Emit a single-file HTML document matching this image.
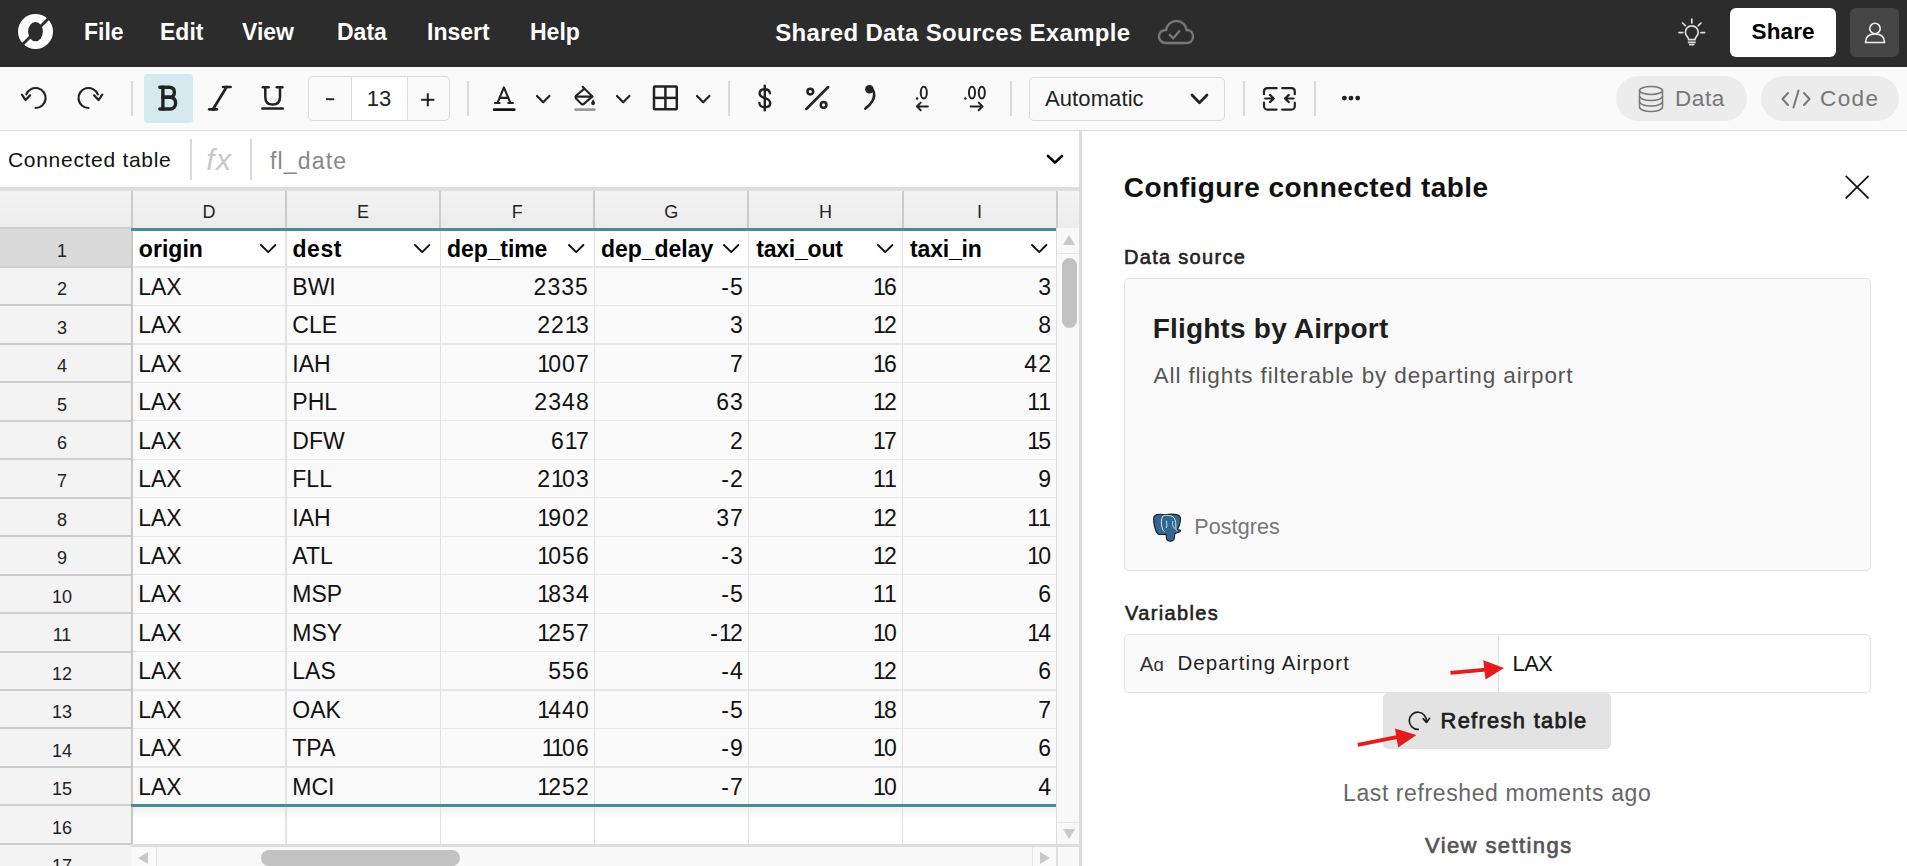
<!DOCTYPE html><html><head><meta charset="utf-8"><style>
html,body{margin:0;padding:0;width:1907px;height:866px;overflow:hidden;background:#fff;font-family:"Liberation Sans",sans-serif}
.t{position:absolute;line-height:1;white-space:nowrap}
</style></head><body>
<div style="position:absolute;left:0;top:0;width:1907px;height:67px;background:#2c2c2c"></div>
<svg style="position:absolute;left:17px;top:13px" width="37" height="37" viewBox="0 0 37 37">
<circle cx="18.5" cy="18.5" r="17.5" fill="#fff"/>
<ellipse cx="18.5" cy="18.6" rx="7.4" ry="9.6" fill="#2c2c2c"/>
<line x1="3.5" y1="33.5" x2="33.5" y2="3.5" stroke="#2c2c2c" stroke-width="2.8"/>
</svg>
<div class="t" style="left:84px;top:20.53px;font-size:23px;font-weight:700;color:#fff;">File</div>
<div class="t" style="left:160px;top:20.53px;font-size:23px;font-weight:700;color:#fff;">Edit</div>
<div class="t" style="left:242px;top:20.53px;font-size:23px;font-weight:700;color:#fff;">View</div>
<div class="t" style="left:337px;top:20.53px;font-size:23px;font-weight:700;color:#fff;">Data</div>
<div class="t" style="left:427px;top:20.53px;font-size:23px;font-weight:700;color:#fff;">Insert</div>
<div class="t" style="left:530px;top:20.53px;font-size:23px;font-weight:700;color:#fff;">Help</div>
<div class="t" id="title" style="left:452.8461538461538px;width:1000px;text-align:center;top:20.78px;font-size:24px;font-weight:700;color:#fff;letter-spacing:0.308px;">Shared Data Sources Example</div>
<svg style="position:absolute;left:1157px;top:19px" width="38" height="26" viewBox="0 0 38 26">
<path d="M9 24 C4 24 2 20.5 2 17.5 C2 13.5 5 11 9 11 C10 5.5 14.5 2 19.5 2 C25 2 29 6 29.5 11 C33.5 11 36 14 36 17.5 C36 21 33.5 24 29.5 24 Z" fill="none" stroke="#777" stroke-width="2.4"/>
<path d="M12 15.2 L16.2 19.3 L23 11.3" fill="none" stroke="#777" stroke-width="2.4"/>
</svg>
<svg style="position:absolute;left:1674px;top:14px;overflow:visible" width="36" height="36" viewBox="1674 14 36 36"><g fill="none" stroke="#ddd" stroke-width="1.7" stroke-linecap="round"><line x1="1691.8" y1="19" x2="1691.8" y2="23"/><line x1="1682.6" y1="23" x2="1685.3" y2="25.6"/><line x1="1701" y1="23" x2="1698.3" y2="25.6"/><line x1="1679" y1="32.6" x2="1682.8" y2="32.6"/><line x1="1700.8" y1="32.6" x2="1704.6" y2="32.6"/><path d="M1688.6 39.6 C1688.6 37.4 1685.4 35.8 1685.4 32.2 C1685.4 28.6 1688.2 25.8 1691.8 25.8 C1695.4 25.8 1698.2 28.6 1698.2 32.2 C1698.2 35.8 1695 37.4 1695 39.6 Z"/><line x1="1688.6" y1="42.4" x2="1695" y2="42.4"/><line x1="1689.8" y1="44.6" x2="1693.8" y2="44.6"/></g></svg>
<div style="position:absolute;left:1730px;top:8px;width:106px;height:49px;background:#fff;border-radius:6px"></div>
<div class="t" id="share" style="left:1283.1500000000005px;width:1000px;text-align:center;top:20.75px;font-size:22.5px;font-weight:700;color:#000;letter-spacing:0.100px;">Share</div>
<div style="position:absolute;left:1850px;top:8px;width:49px;height:49px;background:#464646;border-radius:6px"></div>
<svg style="position:absolute;left:1862.7px;top:20.6px" width="24" height="24" viewBox="0 0 24 24">
<g fill="none" stroke="#eee" stroke-width="1.6"><circle cx="12" cy="7.5" r="5.2"/><path d="M2.5 21.5 C2.5 15.5 6.5 13 12 13 C17.5 13 21.5 15.5 21.5 21.5 Z"/></g></svg>
<div style="position:absolute;left:0;top:67px;width:1907px;height:63px;background:#fafafa;border-bottom:1.5px solid #dedede"></div>
<div style="position:absolute;left:131px;top:81px;width:2px;height:35px;background:#dadada"></div>
<div style="position:absolute;left:467.4px;top:81px;width:2px;height:35px;background:#dadada"></div>
<div style="position:absolute;left:727.9px;top:81px;width:2px;height:35px;background:#dadada"></div>
<div style="position:absolute;left:1009.6px;top:81px;width:2px;height:35px;background:#dadada"></div>
<div style="position:absolute;left:1242.8px;top:81px;width:2px;height:35px;background:#dadada"></div>
<div style="position:absolute;left:1314.2px;top:81px;width:2px;height:35px;background:#dadada"></div>
<svg style="position:absolute;left:14px;top:78px;overflow:visible" width="96" height="40" viewBox="14 78 96 40"><g fill="none" stroke="#222" stroke-width="2.2" stroke-linecap="round" stroke-linejoin="round"><path d="M35.6 108 A10 10 0 1 0 26.3 94.4"/><path d="M21.9 94.6 L25.6 100.1 L30.1 95.2"/><path d="M88.5 108 A10 10 0 1 1 97.8 94.4"/><path d="M94.1 95.2 L98.5 100.1 L102.3 94.6"/></g></svg>
<div style="position:absolute;left:144px;top:74px;width:49px;height:49px;background:#d4eaee;border-radius:4px"></div>
<svg style="position:absolute;left:150px;top:80px;overflow:visible" width="36" height="36" viewBox="150 80 36 36"><g fill="none" stroke="#222" stroke-width="3.4" stroke-linecap="round" stroke-linejoin="round"><path d="M159.8 87.3 H169 C172.5 87.3 174.4 89.3 174.4 92.2 C174.4 95.2 172.5 97.3 169 97.3 H162.9"/><path d="M162.9 97.3 H170 C173.8 97.3 175.6 99.8 175.6 103 C175.6 106.5 173.5 109 170 109 H159.8"/><path d="M162.9 87.3 V109"/></g></svg>
<svg style="position:absolute;left:200px;top:80px;overflow:visible" width="40" height="36" viewBox="200 80 40 36"><g fill="none" stroke="#222" stroke-width="2.7" stroke-linecap="round"><line x1="223.2" y1="87" x2="230.6" y2="87"/><line x1="209.3" y1="109.3" x2="216.8" y2="109.3"/><line x1="226.6" y1="87" x2="213" y2="109.3"/></g></svg>
<svg style="position:absolute;left:255px;top:80px;overflow:visible" width="36" height="36" viewBox="255 80 36 36"><g fill="none" stroke="#222" stroke-width="2.5" stroke-linecap="round"><path d="M265.3 87.2 V97 C265.3 102.3 268 104.6 272.6 104.6 C277.2 104.6 280 102.3 280 97 V87.2"/><line x1="262.8" y1="87.2" x2="268.6" y2="87.2"/><line x1="276.8" y1="87.2" x2="282.4" y2="87.2"/><line x1="262.4" y1="108.4" x2="282.8" y2="108.4"/></g></svg>
<div style="position:absolute;left:308px;top:76px;width:140px;height:43px;border:1px solid #dcdcdc;border-radius:5px;background:#fafafa"></div>
<div style="position:absolute;left:350.5px;top:77px;width:55px;height:43px;background:#fff;border-left:1px solid #dcdcdc;border-right:1px solid #dcdcdc"></div>
<svg style="position:absolute;left:320px;top:90px;overflow:visible" width="20" height="20" viewBox="320 90 20 20"><line x1="326" y1="99.2" x2="334.2" y2="99.2" stroke="#222" stroke-width="1.9"/></svg>
<div class="t" style="left:-121px;width:1000px;text-align:center;top:87.88px;font-size:22px;font-weight:400;color:#222;">13</div>
<svg style="position:absolute;left:415px;top:88px;overflow:visible" width="25" height="25" viewBox="415 88 25 25"><g stroke="#222" stroke-width="2"><line x1="421.2" y1="99.8" x2="434.4" y2="99.8"/><line x1="427.8" y1="93.3" x2="427.8" y2="106.3"/></g></svg>
<svg style="position:absolute;left:488px;top:82px;overflow:visible" width="32" height="32" viewBox="488 82 32 32"><g fill="none" stroke="#222" stroke-width="2.1" stroke-linecap="round" stroke-linejoin="round"><path d="M497.6 102.7 L503.9 87.4 L510.3 102.7"/><line x1="500" y1="97.9" x2="507.8" y2="97.9"/><line x1="495" y1="103" x2="499.6" y2="103"/><line x1="508.3" y1="103" x2="512.9" y2="103"/></g><rect x="492.8" y="108.2" width="22.8" height="2.9" rx="1.45" fill="#111"/></svg>
<svg style="position:absolute;left:533.8px;top:93px;overflow:visible" width="18.40000000000009" height="12.200000000000003" viewBox="533.8 93 18.40000000000009 12.200000000000003"><path d="M536.8 96 L543.0 102.2 L549.2 96" fill="none" stroke="#222" stroke-width="2.3" stroke-linecap="round" stroke-linejoin="round"/></svg>
<svg style="position:absolute;left:570px;top:82px;overflow:visible" width="32" height="32" viewBox="570 82 32 32"><g fill="none" stroke="#222" stroke-width="2.1" stroke-linecap="round" stroke-linejoin="round"><path d="M582.6 86.8 L592.4 96.4 L584.2 103.6 Q582.6 105 581 103.6 L576 98.6 Q574.8 97.2 576 95.8 L584.4 88.6"/><line x1="576.4" y1="96.6" x2="592.2" y2="96.6"/></g><path d="M593.1 99.2 C593.1 99.2 595 102 595 103.2 C595 104.3 594.2 105 593.1 105 C592 105 591.2 104.3 591.2 103.2 C591.2 102 593.1 99.2 593.1 99.2 Z" fill="#222"/><rect x="574.2" y="108.3" width="21.5" height="2.6" rx="1.3" fill="#9a9a9a"/></svg>
<svg style="position:absolute;left:614px;top:93px;overflow:visible" width="18.399999999999977" height="12.200000000000003" viewBox="614 93 18.399999999999977 12.200000000000003"><path d="M617 96 L623.2 102.2 L629.4 96" fill="none" stroke="#222" stroke-width="2.3" stroke-linecap="round" stroke-linejoin="round"/></svg>
<svg style="position:absolute;left:648px;top:80px;overflow:visible" width="36" height="36" viewBox="648 80 36 36"><g fill="none" stroke="#222" stroke-width="2.5" stroke-linejoin="round"><rect x="654" y="86.5" width="22.8" height="22.8" rx="0.8"/><line x1="665.4" y1="86.5" x2="665.4" y2="109.3"/><line x1="654" y1="97.9" x2="676.8" y2="97.9"/></g></svg>
<svg style="position:absolute;left:694.2px;top:93px;overflow:visible" width="18.399999999999977" height="12.200000000000003" viewBox="694.2 93 18.399999999999977 12.200000000000003"><path d="M697.2 96 L703.4000000000001 102.2 L709.6 96" fill="none" stroke="#222" stroke-width="2.3" stroke-linecap="round" stroke-linejoin="round"/></svg>
<svg style="position:absolute;left:752px;top:82px;overflow:visible" width="26" height="32" viewBox="752 82 26 32"><g fill="none" stroke="#222" stroke-width="2.4" stroke-linecap="round"><path d="M770 93.4 C769.6 90.6 767.6 89.3 764.8 89.3 C761.6 89.3 759.6 91.1 759.6 93.6 C759.6 96.6 762.2 97.4 765 98.1 C768 98.9 770.2 100.2 770.2 103.2 C770.2 105.9 768.1 107.2 764.8 107.2 C761.6 107.2 759.6 105.8 759.4 103"/><line x1="764.8" y1="85.8" x2="764.8" y2="110.3"/></g></svg>
<svg style="position:absolute;left:800px;top:82px;overflow:visible" width="34" height="32" viewBox="800 82 34 32"><g fill="none" stroke="#222" stroke-width="2.5" stroke-linecap="round"><circle cx="810.3" cy="91.6" r="2.85"/><circle cx="823.6" cy="104.9" r="2.85"/><line x1="806.3" y1="109" x2="828.2" y2="87"/></g></svg>
<svg style="position:absolute;left:858px;top:82px;overflow:visible" width="22" height="32" viewBox="858 82 22 32"><circle cx="869.4" cy="89.3" r="4.3" fill="#222"/><path d="M873 90 C874.8 93.5 874.4 97.5 872.3 101.2 C870.6 104.2 868.2 106.6 865.3 108.6" fill="none" stroke="#222" stroke-width="2.6" stroke-linecap="round"/></svg>
<svg style="position:absolute;left:910px;top:82px;overflow:visible" width="80" height="32" viewBox="910 82 80 32"><g fill="none" stroke="#222" stroke-width="2" stroke-linecap="round" stroke-linejoin="round"><ellipse cx="923.8" cy="92.6" rx="3.05" ry="5.95"/><path d="M927.8 106.4 H917 M920.7 102.6 L916.9 106.4 L920.7 110.2"/><ellipse cx="972" cy="92.6" rx="3.05" ry="5.95"/><ellipse cx="981.8" cy="92.6" rx="3.05" ry="5.95"/><path d="M970.6 106.4 H982.4 M978.7 102.6 L982.5 106.4 L978.7 110.2"/></g><circle cx="917.1" cy="98.6" r="1.25" fill="#222"/><circle cx="965.4" cy="98.6" r="1.25" fill="#222"/></svg>
<div style="position:absolute;left:1029px;top:77px;width:194px;height:42px;border:1px solid #dcdcdc;border-radius:5px;background:#fafafa"></div>
<div class="t" id="auto" style="left:1045px;top:88.18px;font-size:22px;font-weight:400;color:#222;letter-spacing:0.100px;">Automatic</div>
<svg style="position:absolute;left:1189px;top:91.8px;overflow:visible" width="21" height="13.799999999999997" viewBox="1189 91.8 21 13.799999999999997"><path d="M1192 94.8 L1199.5 102.6 L1207 94.8" fill="none" stroke="#222" stroke-width="2.7" stroke-linecap="round" stroke-linejoin="round"/></svg>
<svg style="position:absolute;left:1258px;top:82px;overflow:visible" width="42" height="32" viewBox="1258 82 42 32"><g fill="none" stroke="#222" stroke-width="2.2" stroke-linecap="round" stroke-linejoin="round"><path d="M1264 94.2 V91.6 C1264 89.6 1265.5 88.2 1267.5 88.2 H1276.6"/><path d="M1264 102.7 V105.9 C1264 107.9 1265.5 109.6 1267.5 109.6 H1276.6"/><path d="M1282.2 88.2 H1291.3 C1293.3 88.2 1294.8 89.6 1294.8 91.6 V94.2"/><path d="M1282.2 109.6 H1291.3 C1293.3 109.6 1294.8 107.9 1294.8 105.9 V102.7"/><path d="M1265.2 98.5 H1273.6 M1270 94.9 L1273.8 98.5 L1270 102.1"/><path d="M1293.6 98.5 H1285.2 M1288.8 94.9 L1285 98.5 L1288.8 102.1"/></g></svg>
<svg style="position:absolute;left:1338px;top:92px;overflow:visible" width="24" height="12" viewBox="1338 92 24 12"><g fill="#222"><circle cx="1344.4" cy="98.1" r="2.4"/><circle cx="1351" cy="98.1" r="2.4"/><circle cx="1357.7" cy="98.1" r="2.4"/></g></svg>
<div style="position:absolute;left:1616px;top:76px;width:131px;height:45px;background:#ececec;border-radius:23px"></div>
<div style="position:absolute;left:1761px;top:76px;width:138px;height:45px;background:#ececec;border-radius:23px"></div>
<svg style="position:absolute;left:1637px;top:85px" width="28" height="28" viewBox="0 0 28 28">
<g fill="none" stroke="#777" stroke-width="1.5"><ellipse cx="14" cy="5.5" rx="11.5" ry="4"/><path d="M2.5 5.5 V22 C2.5 24.5 7.5 26.5 14 26.5 C20.5 26.5 25.5 24.5 25.5 22 V5.5"/>
<path d="M2.5 11 C2.5 13.5 7.5 15.5 14 15.5 C20.5 15.5 25.5 13.5 25.5 11"/><path d="M2.5 16.5 C2.5 19 7.5 21 14 21 C20.5 21 25.5 19 25.5 16.5"/></g></svg>
<div class="t" id="datapill" style="left:1675.0px;top:87.55px;font-size:22.5px;font-weight:400;color:#777;letter-spacing:0.600px;">Data</div>
<svg style="position:absolute;left:1781px;top:89px" width="30" height="20" viewBox="0 0 30 20">
<g fill="none" stroke="#777" stroke-width="2" stroke-linecap="round" stroke-linejoin="round"><path d="M7 4 L1.5 10 L7 16"/><path d="M23 4 L28.5 10 L23 16"/><line x1="17.5" y1="1.5" x2="12.5" y2="18.5"/></g></svg>
<div class="t" id="codepill" style="left:1820px;top:87.55px;font-size:22.5px;font-weight:400;color:#777;letter-spacing:1.400px;">Code</div>
<div style="position:absolute;left:0;top:131px;width:1080px;height:56px;background:#fff"></div>
<div class="t" id="conn" style="left:8.0px;top:148.92px;font-size:21px;font-weight:400;color:#111;letter-spacing:0.700px;">Connected table</div>
<div style="position:absolute;left:190px;top:139px;width:2px;height:41px;background:#dadada"></div>
<div style="position:absolute;left:250px;top:139px;width:2px;height:41px;background:#dadada"></div>
<div class="t" id="fx" style="left:206.19999999999982px;top:145.10px;font-size:30px;font-weight:400;color:#c8c8c8;font-style:italic;letter-spacing:1.600px;">fx</div>
<div class="t" id="fldate" style="left:270px;top:150.43px;font-size:23px;font-weight:400;color:#888;letter-spacing:1.167px;">fl_date</div>
<svg style="position:absolute;left:1044.6px;top:153.1px;overflow:visible" width="20.0" height="12.599999999999994" viewBox="1044.6 153.1 20.0 12.599999999999994"><path d="M1047.6 156.1 L1054.6 162.7 L1061.6 156.1" fill="none" stroke="#000" stroke-width="2.6" stroke-linecap="round" stroke-linejoin="round"/></svg>
<div style="position:absolute;left:0;top:187px;width:1080px;height:4px;background:#dedede"></div>
<div style="position:absolute;left:0;top:191px;width:1080px;height:37px;background:linear-gradient(#f3f3f3,#ececec)"></div>
<div style="position:absolute;left:0;top:228px;width:132px;height:638px;background:#f3f3f3"></div>
<div style="position:absolute;left:0;top:228.5px;width:132px;height:38.45px;background:#dadada"></div>
<div style="position:absolute;left:133px;top:228.5px;width:923px;height:38.45px;background:#fff"></div>
<div style="position:absolute;left:133px;top:266.9px;width:923px;height:538.30px;background:#fafafa"></div>
<div style="position:absolute;left:133px;top:805.2px;width:923px;height:38.75px;background:#fff"></div>
<div style="position:absolute;left:133px;top:805.2px;width:923px;height:14px;background:linear-gradient(rgba(0,0,0,0.07),rgba(0,0,0,0))"></div>
<div style="position:absolute;left:133px;top:266.4px;width:923px;height:1.3px;background:#e6e6e6"></div>
<div style="position:absolute;left:133px;top:304.9px;width:923px;height:1.3px;background:#e6e6e6"></div>
<div style="position:absolute;left:133px;top:343.4px;width:923px;height:1.3px;background:#e6e6e6"></div>
<div style="position:absolute;left:133px;top:381.8px;width:923px;height:1.3px;background:#e6e6e6"></div>
<div style="position:absolute;left:133px;top:420.2px;width:923px;height:1.3px;background:#e6e6e6"></div>
<div style="position:absolute;left:133px;top:458.7px;width:923px;height:1.3px;background:#e6e6e6"></div>
<div style="position:absolute;left:133px;top:497.2px;width:923px;height:1.3px;background:#e6e6e6"></div>
<div style="position:absolute;left:133px;top:535.6px;width:923px;height:1.3px;background:#e6e6e6"></div>
<div style="position:absolute;left:133px;top:574.0px;width:923px;height:1.3px;background:#e6e6e6"></div>
<div style="position:absolute;left:133px;top:612.5px;width:923px;height:1.3px;background:#e6e6e6"></div>
<div style="position:absolute;left:133px;top:651.0px;width:923px;height:1.3px;background:#e6e6e6"></div>
<div style="position:absolute;left:133px;top:689.4px;width:923px;height:1.3px;background:#e6e6e6"></div>
<div style="position:absolute;left:133px;top:727.9px;width:923px;height:1.3px;background:#e6e6e6"></div>
<div style="position:absolute;left:133px;top:766.3px;width:923px;height:1.3px;background:#e6e6e6"></div>
<div style="position:absolute;left:133px;top:804.8px;width:923px;height:1.3px;background:#e6e6e6"></div>
<div style="position:absolute;left:0;top:265.9px;width:132px;height:2px;background:#cdcdcd"></div>
<div style="position:absolute;left:0;top:304.4px;width:132px;height:2px;background:#cdcdcd"></div>
<div style="position:absolute;left:0;top:342.9px;width:132px;height:2px;background:#cdcdcd"></div>
<div style="position:absolute;left:0;top:381.3px;width:132px;height:2px;background:#cdcdcd"></div>
<div style="position:absolute;left:0;top:419.8px;width:132px;height:2px;background:#cdcdcd"></div>
<div style="position:absolute;left:0;top:458.2px;width:132px;height:2px;background:#cdcdcd"></div>
<div style="position:absolute;left:0;top:496.7px;width:132px;height:2px;background:#cdcdcd"></div>
<div style="position:absolute;left:0;top:535.1px;width:132px;height:2px;background:#cdcdcd"></div>
<div style="position:absolute;left:0;top:573.5px;width:132px;height:2px;background:#cdcdcd"></div>
<div style="position:absolute;left:0;top:612.0px;width:132px;height:2px;background:#cdcdcd"></div>
<div style="position:absolute;left:0;top:650.5px;width:132px;height:2px;background:#cdcdcd"></div>
<div style="position:absolute;left:0;top:688.9px;width:132px;height:2px;background:#cdcdcd"></div>
<div style="position:absolute;left:0;top:727.4px;width:132px;height:2px;background:#cdcdcd"></div>
<div style="position:absolute;left:0;top:765.8px;width:132px;height:2px;background:#cdcdcd"></div>
<div style="position:absolute;left:0;top:804.2px;width:132px;height:2px;background:#cdcdcd"></div>
<div style="position:absolute;left:0;top:842.7px;width:132px;height:2px;background:#cdcdcd"></div>
<div style="position:absolute;left:131.0px;top:191px;width:2px;height:37px;background:#cbcbcb"></div>
<div style="position:absolute;left:131.0px;top:228px;width:2px;height:616px;background:#c8c8c8"></div>
<div style="position:absolute;left:285.1px;top:191px;width:2px;height:37px;background:#cbcbcb"></div>
<div style="position:absolute;left:285.4px;top:228px;width:1.4px;height:616px;background:#e2e2e2"></div>
<div style="position:absolute;left:439.2px;top:191px;width:2px;height:37px;background:#cbcbcb"></div>
<div style="position:absolute;left:439.5px;top:228px;width:1.4px;height:616px;background:#e2e2e2"></div>
<div style="position:absolute;left:593.3px;top:191px;width:2px;height:37px;background:#cbcbcb"></div>
<div style="position:absolute;left:593.6px;top:228px;width:1.4px;height:616px;background:#e2e2e2"></div>
<div style="position:absolute;left:747.4px;top:191px;width:2px;height:37px;background:#cbcbcb"></div>
<div style="position:absolute;left:747.7px;top:228px;width:1.4px;height:616px;background:#e2e2e2"></div>
<div style="position:absolute;left:901.5px;top:191px;width:2px;height:37px;background:#cbcbcb"></div>
<div style="position:absolute;left:901.8px;top:228px;width:1.4px;height:616px;background:#e2e2e2"></div>
<div style="position:absolute;left:1055.6px;top:191px;width:2px;height:37px;background:#cbcbcb"></div>
<div style="position:absolute;left:1055.9px;top:228px;width:1.4px;height:616px;background:#e2e2e2"></div>
<div style="position:absolute;left:0;top:226.5px;width:132px;height:2px;background:#cdcdcd"></div>
<div style="position:absolute;left:131px;top:228px;width:925px;height:3px;background:#458c9c"></div>
<div style="position:absolute;left:131px;top:803.8px;width:925px;height:3px;background:#458c9c"></div>
<div class="t" style="left:-291.0px;width:1000px;text-align:center;top:202.76px;font-size:18px;font-weight:400;color:#222;">D</div>
<div class="t" style="left:-136.89999999999998px;width:1000px;text-align:center;top:202.76px;font-size:18px;font-weight:400;color:#222;">E</div>
<div class="t" style="left:17.200000000000045px;width:1000px;text-align:center;top:202.76px;font-size:18px;font-weight:400;color:#222;">F</div>
<div class="t" style="left:171.29999999999995px;width:1000px;text-align:center;top:202.76px;font-size:18px;font-weight:400;color:#222;">G</div>
<div class="t" style="left:325.4px;width:1000px;text-align:center;top:202.76px;font-size:18px;font-weight:400;color:#222;">H</div>
<div class="t" style="left:479.5px;width:1000px;text-align:center;top:202.76px;font-size:18px;font-weight:400;color:#222;">I</div>
<div class="t" style="left:-438px;width:1000px;text-align:center;top:241.76px;font-size:18px;font-weight:400;color:#222;">1</div>
<div class="t" style="left:-438px;width:1000px;text-align:center;top:280.21px;font-size:18px;font-weight:400;color:#222;">2</div>
<div class="t" style="left:-438px;width:1000px;text-align:center;top:318.66px;font-size:18px;font-weight:400;color:#222;">3</div>
<div class="t" style="left:-438px;width:1000px;text-align:center;top:357.11px;font-size:18px;font-weight:400;color:#222;">4</div>
<div class="t" style="left:-438px;width:1000px;text-align:center;top:395.56px;font-size:18px;font-weight:400;color:#222;">5</div>
<div class="t" style="left:-438px;width:1000px;text-align:center;top:434.01px;font-size:18px;font-weight:400;color:#222;">6</div>
<div class="t" style="left:-438px;width:1000px;text-align:center;top:472.46px;font-size:18px;font-weight:400;color:#222;">7</div>
<div class="t" style="left:-438px;width:1000px;text-align:center;top:510.91px;font-size:18px;font-weight:400;color:#222;">8</div>
<div class="t" style="left:-438px;width:1000px;text-align:center;top:549.36px;font-size:18px;font-weight:400;color:#222;">9</div>
<div class="t" style="left:-438px;width:1000px;text-align:center;top:587.81px;font-size:18px;font-weight:400;color:#222;">10</div>
<div class="t" style="left:-438px;width:1000px;text-align:center;top:626.26px;font-size:18px;font-weight:400;color:#222;">11</div>
<div class="t" style="left:-438px;width:1000px;text-align:center;top:664.71px;font-size:18px;font-weight:400;color:#222;">12</div>
<div class="t" style="left:-438px;width:1000px;text-align:center;top:703.16px;font-size:18px;font-weight:400;color:#222;">13</div>
<div class="t" style="left:-438px;width:1000px;text-align:center;top:741.61px;font-size:18px;font-weight:400;color:#222;">14</div>
<div class="t" style="left:-438px;width:1000px;text-align:center;top:780.06px;font-size:18px;font-weight:400;color:#222;">15</div>
<div class="t" style="left:-438px;width:1000px;text-align:center;top:818.51px;font-size:18px;font-weight:400;color:#222;">16</div>
<div class="t" style="left:-438px;width:1000px;text-align:center;top:856.96px;font-size:18px;font-weight:400;color:#222;">17</div>
<div class="t" id="h0" style="left:138.80000000000007px;top:238.33px;font-size:23px;font-weight:700;color:#000;letter-spacing:0.040px;">origin</div>
<svg style="position:absolute;left:258.20000000000005px;top:242.1px;overflow:visible" width="20.399999999999977" height="13.099999999999994" viewBox="258.20000000000005 242.1 20.399999999999977 13.099999999999994"><path d="M261.20000000000005 245.1 L268.40000000000003 252.2 L275.6 245.1" fill="none" stroke="#111" stroke-width="1.9" stroke-linecap="round" stroke-linejoin="round"/></svg>
<div class="t" id="h1" style="left:292.4999999999999px;top:238.33px;font-size:23px;font-weight:700;color:#000;letter-spacing:0.533px;">dest</div>
<svg style="position:absolute;left:412.3px;top:242.1px;overflow:visible" width="20.399999999999977" height="13.099999999999994" viewBox="412.3 242.1 20.399999999999977 13.099999999999994"><path d="M415.3 245.1 L422.5 252.2 L429.7 245.1" fill="none" stroke="#111" stroke-width="1.9" stroke-linecap="round" stroke-linejoin="round"/></svg>
<div class="t" id="h2" style="left:446.9999999999997px;top:238.33px;font-size:23px;font-weight:700;color:#000;letter-spacing:-0.086px;">dep_time</div>
<svg style="position:absolute;left:566.4px;top:242.1px;overflow:visible" width="20.399999999999977" height="13.099999999999994" viewBox="566.4 242.1 20.399999999999977 13.099999999999994"><path d="M569.4 245.1 L576.5999999999999 252.2 L583.8 245.1" fill="none" stroke="#111" stroke-width="1.9" stroke-linecap="round" stroke-linejoin="round"/></svg>
<div class="t" id="h3" style="left:600.8999999999994px;top:238.33px;font-size:23px;font-weight:700;color:#000;letter-spacing:-0.025px;">dep_delay</div>
<svg style="position:absolute;left:720.5px;top:242.1px;overflow:visible" width="20.399999999999977" height="13.099999999999994" viewBox="720.5 242.1 20.399999999999977 13.099999999999994"><path d="M723.5 245.1 L730.7 252.2 L737.9 245.1" fill="none" stroke="#111" stroke-width="1.9" stroke-linecap="round" stroke-linejoin="round"/></svg>
<div class="t" id="h4" style="left:756.1999999999997px;top:238.33px;font-size:23px;font-weight:700;color:#000;letter-spacing:-0.200px;">taxi_out</div>
<svg style="position:absolute;left:874.6px;top:242.1px;overflow:visible" width="20.399999999999977" height="13.099999999999994" viewBox="874.6 242.1 20.399999999999977 13.099999999999994"><path d="M877.6 245.1 L884.8 252.2 L892.0 245.1" fill="none" stroke="#111" stroke-width="1.9" stroke-linecap="round" stroke-linejoin="round"/></svg>
<div class="t" id="h5" style="left:910.0999999999995px;top:238.33px;font-size:23px;font-weight:700;color:#000;letter-spacing:-0.200px;">taxi_in</div>
<svg style="position:absolute;left:1028.6999999999998px;top:242.1px;overflow:visible" width="20.40000000000009" height="13.099999999999994" viewBox="1028.6999999999998 242.1 20.40000000000009 13.099999999999994"><path d="M1031.6999999999998 245.1 L1038.8999999999999 252.2 L1046.1 245.1" fill="none" stroke="#111" stroke-width="1.9" stroke-linecap="round" stroke-linejoin="round"/></svg>
<div class="t" id="cellL" style="left:138.19999999999993px;top:275.88px;font-size:23px;font-weight:400;color:#111;letter-spacing:0.000px;">LAX</div>
<div class="t" style="left:292.29999999999995px;top:275.88px;font-size:23px;font-weight:400;color:#111;letter-spacing:0.000px;">BWI</div>
<div class="t" id="cellN" style="right:1318.0333333333342px;top:275.88px;font-size:23px;font-weight:400;color:#111;letter-spacing:1.067px;">2335</div>
<div class="t" style="right:1163.1333333333343px;top:275.88px;font-size:23px;font-weight:400;color:#111;letter-spacing:1.067px;">-5</div>
<div class="t" style="right:1009.0333333333343px;top:275.88px;font-size:23px;font-weight:400;color:#111;letter-spacing:1.067px;"><span style="letter-spacing:-1.73px">1</span>6</div>
<div class="t" style="right:854.9333333333343px;top:275.88px;font-size:23px;font-weight:400;color:#111;letter-spacing:1.067px;">3</div>
<div class="t" style="left:138.19999999999993px;top:314.33px;font-size:23px;font-weight:400;color:#111;letter-spacing:0.000px;">LAX</div>
<div class="t" style="left:292.29999999999995px;top:314.33px;font-size:23px;font-weight:400;color:#111;letter-spacing:0.000px;">CLE</div>
<div class="t" style="right:1317.2333333333345px;top:314.33px;font-size:23px;font-weight:400;color:#111;letter-spacing:1.067px;">22<span style="letter-spacing:-1.73px">1</span>3</div>
<div class="t" style="right:1163.1333333333343px;top:314.33px;font-size:23px;font-weight:400;color:#111;letter-spacing:1.067px;">3</div>
<div class="t" style="right:1009.0333333333343px;top:314.33px;font-size:23px;font-weight:400;color:#111;letter-spacing:1.067px;"><span style="letter-spacing:-1.73px">1</span>2</div>
<div class="t" style="right:854.9333333333343px;top:314.33px;font-size:23px;font-weight:400;color:#111;letter-spacing:1.067px;">8</div>
<div class="t" style="left:138.19999999999993px;top:352.78px;font-size:23px;font-weight:400;color:#111;letter-spacing:0.000px;">LAX</div>
<div class="t" style="left:292.29999999999995px;top:352.78px;font-size:23px;font-weight:400;color:#111;letter-spacing:0.000px;">IAH</div>
<div class="t" style="right:1317.2333333333345px;top:352.78px;font-size:23px;font-weight:400;color:#111;letter-spacing:1.067px;"><span style="letter-spacing:-1.73px">1</span>007</div>
<div class="t" style="right:1163.1333333333343px;top:352.78px;font-size:23px;font-weight:400;color:#111;letter-spacing:1.067px;">7</div>
<div class="t" style="right:1009.0333333333343px;top:352.78px;font-size:23px;font-weight:400;color:#111;letter-spacing:1.067px;"><span style="letter-spacing:-1.73px">1</span>6</div>
<div class="t" style="right:854.9333333333343px;top:352.78px;font-size:23px;font-weight:400;color:#111;letter-spacing:1.067px;">42</div>
<div class="t" style="left:138.19999999999993px;top:391.23px;font-size:23px;font-weight:400;color:#111;letter-spacing:0.000px;">LAX</div>
<div class="t" style="left:292.29999999999995px;top:391.23px;font-size:23px;font-weight:400;color:#111;letter-spacing:0.000px;">PHL</div>
<div class="t" style="right:1317.2333333333345px;top:391.23px;font-size:23px;font-weight:400;color:#111;letter-spacing:1.067px;">2348</div>
<div class="t" style="right:1163.1333333333343px;top:391.23px;font-size:23px;font-weight:400;color:#111;letter-spacing:1.067px;">63</div>
<div class="t" style="right:1009.0333333333343px;top:391.23px;font-size:23px;font-weight:400;color:#111;letter-spacing:1.067px;"><span style="letter-spacing:-1.73px">1</span>2</div>
<div class="t" style="right:854.9333333333343px;top:391.23px;font-size:23px;font-weight:400;color:#111;letter-spacing:1.067px;"><span style="letter-spacing:-1.73px">1</span><span style="letter-spacing:1.07px">1</span></div>
<div class="t" style="left:138.19999999999993px;top:429.68px;font-size:23px;font-weight:400;color:#111;letter-spacing:0.000px;">LAX</div>
<div class="t" style="left:292.29999999999995px;top:429.68px;font-size:23px;font-weight:400;color:#111;letter-spacing:0.000px;">DFW</div>
<div class="t" style="right:1317.2333333333345px;top:429.68px;font-size:23px;font-weight:400;color:#111;letter-spacing:1.067px;">6<span style="letter-spacing:-1.73px">1</span>7</div>
<div class="t" style="right:1163.1333333333343px;top:429.68px;font-size:23px;font-weight:400;color:#111;letter-spacing:1.067px;">2</div>
<div class="t" style="right:1009.0333333333343px;top:429.68px;font-size:23px;font-weight:400;color:#111;letter-spacing:1.067px;"><span style="letter-spacing:-1.73px">1</span>7</div>
<div class="t" style="right:854.9333333333343px;top:429.68px;font-size:23px;font-weight:400;color:#111;letter-spacing:1.067px;"><span style="letter-spacing:-1.73px">1</span>5</div>
<div class="t" style="left:138.19999999999993px;top:468.13px;font-size:23px;font-weight:400;color:#111;letter-spacing:0.000px;">LAX</div>
<div class="t" style="left:292.29999999999995px;top:468.13px;font-size:23px;font-weight:400;color:#111;letter-spacing:0.000px;">FLL</div>
<div class="t" style="right:1317.2333333333345px;top:468.13px;font-size:23px;font-weight:400;color:#111;letter-spacing:1.067px;">2<span style="letter-spacing:-1.73px">1</span>03</div>
<div class="t" style="right:1163.1333333333343px;top:468.13px;font-size:23px;font-weight:400;color:#111;letter-spacing:1.067px;">-2</div>
<div class="t" style="right:1009.0333333333343px;top:468.13px;font-size:23px;font-weight:400;color:#111;letter-spacing:1.067px;"><span style="letter-spacing:-1.73px">1</span><span style="letter-spacing:1.07px">1</span></div>
<div class="t" style="right:854.9333333333343px;top:468.13px;font-size:23px;font-weight:400;color:#111;letter-spacing:1.067px;">9</div>
<div class="t" style="left:138.19999999999993px;top:506.58px;font-size:23px;font-weight:400;color:#111;letter-spacing:0.000px;">LAX</div>
<div class="t" style="left:292.29999999999995px;top:506.58px;font-size:23px;font-weight:400;color:#111;letter-spacing:0.000px;">IAH</div>
<div class="t" style="right:1317.2333333333345px;top:506.58px;font-size:23px;font-weight:400;color:#111;letter-spacing:1.067px;"><span style="letter-spacing:-1.73px">1</span>902</div>
<div class="t" style="right:1163.1333333333343px;top:506.58px;font-size:23px;font-weight:400;color:#111;letter-spacing:1.067px;">37</div>
<div class="t" style="right:1009.0333333333343px;top:506.58px;font-size:23px;font-weight:400;color:#111;letter-spacing:1.067px;"><span style="letter-spacing:-1.73px">1</span>2</div>
<div class="t" style="right:854.9333333333343px;top:506.58px;font-size:23px;font-weight:400;color:#111;letter-spacing:1.067px;"><span style="letter-spacing:-1.73px">1</span><span style="letter-spacing:1.07px">1</span></div>
<div class="t" style="left:138.19999999999993px;top:545.03px;font-size:23px;font-weight:400;color:#111;letter-spacing:0.000px;">LAX</div>
<div class="t" style="left:292.29999999999995px;top:545.03px;font-size:23px;font-weight:400;color:#111;letter-spacing:0.000px;">ATL</div>
<div class="t" style="right:1317.2333333333345px;top:545.03px;font-size:23px;font-weight:400;color:#111;letter-spacing:1.067px;"><span style="letter-spacing:-1.73px">1</span>056</div>
<div class="t" style="right:1163.1333333333343px;top:545.03px;font-size:23px;font-weight:400;color:#111;letter-spacing:1.067px;">-3</div>
<div class="t" style="right:1009.0333333333343px;top:545.03px;font-size:23px;font-weight:400;color:#111;letter-spacing:1.067px;"><span style="letter-spacing:-1.73px">1</span>2</div>
<div class="t" style="right:854.9333333333343px;top:545.03px;font-size:23px;font-weight:400;color:#111;letter-spacing:1.067px;"><span style="letter-spacing:-1.73px">1</span>0</div>
<div class="t" style="left:138.19999999999993px;top:583.48px;font-size:23px;font-weight:400;color:#111;letter-spacing:0.000px;">LAX</div>
<div class="t" style="left:292.29999999999995px;top:583.48px;font-size:23px;font-weight:400;color:#111;letter-spacing:0.000px;">MSP</div>
<div class="t" style="right:1317.2333333333345px;top:583.48px;font-size:23px;font-weight:400;color:#111;letter-spacing:1.067px;"><span style="letter-spacing:-1.73px">1</span>834</div>
<div class="t" style="right:1163.1333333333343px;top:583.48px;font-size:23px;font-weight:400;color:#111;letter-spacing:1.067px;">-5</div>
<div class="t" style="right:1009.0333333333343px;top:583.48px;font-size:23px;font-weight:400;color:#111;letter-spacing:1.067px;"><span style="letter-spacing:-1.73px">1</span><span style="letter-spacing:1.07px">1</span></div>
<div class="t" style="right:854.9333333333343px;top:583.48px;font-size:23px;font-weight:400;color:#111;letter-spacing:1.067px;">6</div>
<div class="t" style="left:138.19999999999993px;top:621.93px;font-size:23px;font-weight:400;color:#111;letter-spacing:0.000px;">LAX</div>
<div class="t" style="left:292.29999999999995px;top:621.93px;font-size:23px;font-weight:400;color:#111;letter-spacing:0.000px;">MSY</div>
<div class="t" style="right:1317.2333333333345px;top:621.93px;font-size:23px;font-weight:400;color:#111;letter-spacing:1.067px;"><span style="letter-spacing:-1.73px">1</span>257</div>
<div class="t" style="right:1163.1333333333343px;top:621.93px;font-size:23px;font-weight:400;color:#111;letter-spacing:1.067px;">-<span style="letter-spacing:-1.73px">1</span>2</div>
<div class="t" style="right:1009.0333333333343px;top:621.93px;font-size:23px;font-weight:400;color:#111;letter-spacing:1.067px;"><span style="letter-spacing:-1.73px">1</span>0</div>
<div class="t" style="right:854.9333333333343px;top:621.93px;font-size:23px;font-weight:400;color:#111;letter-spacing:1.067px;"><span style="letter-spacing:-1.73px">1</span>4</div>
<div class="t" style="left:138.19999999999993px;top:660.38px;font-size:23px;font-weight:400;color:#111;letter-spacing:0.000px;">LAX</div>
<div class="t" style="left:292.29999999999995px;top:660.38px;font-size:23px;font-weight:400;color:#111;letter-spacing:0.000px;">LAS</div>
<div class="t" style="right:1317.2333333333345px;top:660.38px;font-size:23px;font-weight:400;color:#111;letter-spacing:1.067px;">556</div>
<div class="t" style="right:1163.1333333333343px;top:660.38px;font-size:23px;font-weight:400;color:#111;letter-spacing:1.067px;">-4</div>
<div class="t" style="right:1009.0333333333343px;top:660.38px;font-size:23px;font-weight:400;color:#111;letter-spacing:1.067px;"><span style="letter-spacing:-1.73px">1</span>2</div>
<div class="t" style="right:854.9333333333343px;top:660.38px;font-size:23px;font-weight:400;color:#111;letter-spacing:1.067px;">6</div>
<div class="t" style="left:138.19999999999993px;top:698.83px;font-size:23px;font-weight:400;color:#111;letter-spacing:0.000px;">LAX</div>
<div class="t" style="left:292.29999999999995px;top:698.83px;font-size:23px;font-weight:400;color:#111;letter-spacing:0.000px;">OAK</div>
<div class="t" style="right:1317.2333333333345px;top:698.83px;font-size:23px;font-weight:400;color:#111;letter-spacing:1.067px;"><span style="letter-spacing:-1.73px">1</span>440</div>
<div class="t" style="right:1163.1333333333343px;top:698.83px;font-size:23px;font-weight:400;color:#111;letter-spacing:1.067px;">-5</div>
<div class="t" style="right:1009.0333333333343px;top:698.83px;font-size:23px;font-weight:400;color:#111;letter-spacing:1.067px;"><span style="letter-spacing:-1.73px">1</span>8</div>
<div class="t" style="right:854.9333333333343px;top:698.83px;font-size:23px;font-weight:400;color:#111;letter-spacing:1.067px;">7</div>
<div class="t" style="left:138.19999999999993px;top:737.28px;font-size:23px;font-weight:400;color:#111;letter-spacing:0.000px;">LAX</div>
<div class="t" style="left:292.29999999999995px;top:737.28px;font-size:23px;font-weight:400;color:#111;letter-spacing:0.000px;">TPA</div>
<div class="t" style="right:1317.2333333333345px;top:737.28px;font-size:23px;font-weight:400;color:#111;letter-spacing:1.067px;"><span style="letter-spacing:-1.73px">1</span><span style="letter-spacing:-1.73px">1</span>06</div>
<div class="t" style="right:1163.1333333333343px;top:737.28px;font-size:23px;font-weight:400;color:#111;letter-spacing:1.067px;">-9</div>
<div class="t" style="right:1009.0333333333343px;top:737.28px;font-size:23px;font-weight:400;color:#111;letter-spacing:1.067px;"><span style="letter-spacing:-1.73px">1</span>0</div>
<div class="t" style="right:854.9333333333343px;top:737.28px;font-size:23px;font-weight:400;color:#111;letter-spacing:1.067px;">6</div>
<div class="t" style="left:138.19999999999993px;top:775.73px;font-size:23px;font-weight:400;color:#111;letter-spacing:0.000px;">LAX</div>
<div class="t" style="left:292.29999999999995px;top:775.73px;font-size:23px;font-weight:400;color:#111;letter-spacing:0.000px;">MCI</div>
<div class="t" style="right:1317.2333333333345px;top:775.73px;font-size:23px;font-weight:400;color:#111;letter-spacing:1.067px;"><span style="letter-spacing:-1.73px">1</span>252</div>
<div class="t" style="right:1163.1333333333343px;top:775.73px;font-size:23px;font-weight:400;color:#111;letter-spacing:1.067px;">-7</div>
<div class="t" style="right:1009.0333333333343px;top:775.73px;font-size:23px;font-weight:400;color:#111;letter-spacing:1.067px;"><span style="letter-spacing:-1.73px">1</span>0</div>
<div class="t" style="right:854.9333333333343px;top:775.73px;font-size:23px;font-weight:400;color:#111;letter-spacing:1.067px;">4</div>
<div style="position:absolute;left:1056px;top:228px;width:23px;height:638px;background:#f9f9f9;border-left:1.5px solid #dedede"></div>
<div style="position:absolute;left:1057px;top:228px;width:23px;height:25px;border-bottom:1px solid #e4e4e4;background:#f8f8f8"></div>
<svg style="position:absolute;left:1062px;top:234px" width="14" height="12" viewBox="0 0 14 12"><path d="M7 1 L13 11 L1 11 Z" fill="#c8c8c8"/></svg>
<div style="position:absolute;left:1062px;top:258px;width:15px;height:70px;background:#c2c2c2;border-radius:8px"></div>
<div style="position:absolute;left:1057px;top:822px;width:23px;height:22px;border-top:1px solid #e4e4e4;background:#f8f8f8"></div>
<svg style="position:absolute;left:1062px;top:828px" width="14" height="12" viewBox="0 0 14 12"><path d="M1 1 L13 1 L7 11 Z" fill="#c8c8c8"/></svg>
<div style="position:absolute;left:131px;top:843.5px;width:949px;height:22.5px;background:#f9f9f9;border-top:3px solid #dedede"></div>
<div style="position:absolute;left:133px;top:846.5px;width:23px;height:20px;border-right:1px solid #e4e4e4;background:#fafafa"></div>
<svg style="position:absolute;left:137px;top:851px" width="12" height="14" viewBox="0 0 12 14"><path d="M1 7 L11 1 L11 13 Z" fill="#c8c8c8"/></svg>
<div style="position:absolute;left:261px;top:850px;width:199px;height:16px;background:#c2c2c2;border-radius:8px"></div>
<div style="position:absolute;left:1032px;top:846.5px;width:24px;height:20px;border-left:1px solid #e4e4e4;background:#fafafa"></div>
<svg style="position:absolute;left:1039px;top:851px" width="12" height="14" viewBox="0 0 12 14"><path d="M11 7 L1 1 L1 13 Z" fill="#c8c8c8"/></svg>
<div style="position:absolute;left:1056px;top:846.5px;width:1.5px;height:20px;background:#e0e0e0"></div>
<div style="position:absolute;left:1079px;top:131px;width:3px;height:735px;background:#dcdcdc"></div>
<div style="position:absolute;left:1082px;top:131px;width:825px;height:735px;background:#fff"></div>
<div class="t" id="configure" style="left:1123.7999999999993px;top:174.10px;font-size:28px;font-weight:700;color:#111;letter-spacing:0.467px;">Configure connected table</div>
<svg style="position:absolute;left:1840px;top:170px;overflow:visible" width="34" height="34" viewBox="1840 170 34 34"><g stroke="#111" stroke-width="1.7"><line x1="1845.7" y1="175.9" x2="1868.6" y2="198.4"/><line x1="1868.6" y1="175.9" x2="1845.7" y2="198.4"/></g></svg>
<div class="t" id="datasource" style="left:1124px;top:246.87px;font-size:20px;font-weight:400;color:#222;-webkit-text-stroke:0.6px #222;letter-spacing:1.300px;">Data source</div>
<div style="position:absolute;left:1124px;top:278px;width:745px;height:291px;background:#fafafa;border:1.5px solid #e2e2e2;border-radius:5px"></div>
<div class="t" id="flights" style="left:1152.7999999999993px;top:314.80px;font-size:28px;font-weight:700;color:#1e1e1e;letter-spacing:0.188px;">Flights by Airport</div>
<div class="t" id="allflights" style="left:1153.5999999999985px;top:364.75px;font-size:22.5px;font-weight:400;color:#555;letter-spacing:0.890px;">All flights filterable by departing airport</div>
<svg style="position:absolute;left:1150px;top:510px;overflow:visible" width="34" height="36" viewBox="1150 510 34 36"><path d="M1154 516.5 C1155.5 514.5 1157.5 514.2 1160 514.3 C1163 514.4 1165 515 1166.5 514.6 C1169 514 1173 514 1176.5 514.6 C1179 515 1180.8 516.8 1180.5 520 C1180.2 523.5 1179 527 1177.5 529.5 C1179 529.8 1180.5 529.8 1180.8 530.6 C1180 532 1177.5 533 1175 533.5 C1174.4 535.5 1174.6 538 1173.8 539.8 C1172.8 541.5 1167.8 541.8 1166.8 539.6 C1166 537.8 1166.4 535.5 1166.1 534.3 C1164 534.5 1161.5 534.6 1159 534.5 C1157 534.3 1155.8 531 1155 528 C1154 524.5 1153.2 520 1154 516.5 Z" fill="#336791" stroke="#1a1a1a" stroke-width="1.1"/><path d="M1162.6 516.2 C1161.2 519.5 1161 524 1162 527.5 C1162.8 530 1163.6 531.2 1164.5 531.6 M1163 516 C1166 514.8 1171.5 515 1174 517.8 C1175.8 520.2 1176 524.5 1175.8 527.5 C1175.7 529.5 1176.3 530.8 1177.5 530.8 M1166.4 520.8 C1166.8 523 1167 525 1166.5 528 M1173 521 C1172 523 1172.5 526 1174.5 528.5" fill="none" stroke="#e8f0f8" stroke-width="0.9"/></svg>
<div class="t" id="postgres" style="left:1194.2000000000007px;top:517.00px;font-size:21.5px;font-weight:400;color:#777;letter-spacing:0.114px;">Postgres</div>
<div class="t" id="variables" style="left:1125px;top:603.07px;font-size:20px;font-weight:400;color:#222;-webkit-text-stroke:0.6px #222;letter-spacing:1.350px;">Variables</div>
<div style="position:absolute;left:1124px;top:634px;width:745px;height:57px;background:#fff;border:1.5px solid #e2e2e2;border-radius:5px"></div>
<div style="position:absolute;left:1125.5px;top:635.5px;width:372px;height:56px;background:#fafafa;border-right:1.5px solid #e2e2e2;border-radius:5px 0 0 5px"></div>
<div class="t" style="left:1139.8px;top:653.85px;font-size:20.5px;font-weight:400;color:#333;">A</div>
<div class="t" style="left:1153.6px;top:655.84px;font-size:18.5px;font-weight:400;color:#333;">ɑ</div>
<div class="t" id="departing" style="left:1177.4000000000015px;top:652.65px;font-size:20.5px;font-weight:400;color:#1e1e1e;letter-spacing:1.100px;">Departing Airport</div>
<div class="t" id="laxvar" style="left:1512.5999999999985px;top:652.55px;font-size:21.8px;font-weight:400;color:#111;letter-spacing:-0.500px;">LAX</div>
<div style="position:absolute;left:1383px;top:693px;width:228px;height:56px;background:#e3e3e3;border-radius:5px"></div>
<svg style="position:absolute;left:1404px;top:706px;overflow:visible" width="30" height="28" viewBox="1404 706 30 28"><g fill="none" stroke="#1e1e1e" stroke-width="1.7" stroke-linecap="round" stroke-linejoin="round"><path d="M1418.2 729.4 A8.6 8.6 0 1 1 1426.4 722"/><path d="M1423.2 718.6 L1426.5 722.4 L1429.5 718.3"/></g></svg>
<div class="t" id="refresh" style="left:1440.5999999999985px;top:710.15px;font-size:21.8px;font-weight:400;color:#1e1e1e;-webkit-text-stroke:0.75px #1e1e1e;letter-spacing:1.333px;">Refresh table</div>
<div class="t" id="lastref" style="left:997.2px;width:1000px;text-align:center;top:781.53px;font-size:23px;font-weight:400;color:#666;letter-spacing:0.600px;">Last refreshed moments ago</div>
<div class="t" id="viewset" style="left:998.7916666666667px;width:1000px;text-align:center;top:834.68px;font-size:22px;font-weight:400;color:#555;-webkit-text-stroke:0.7px #555;letter-spacing:1.417px;">View settings</div>
<svg style="position:absolute;left:1440px;top:650px" width="80" height="40" viewBox="1440 650 80 40">
<path d="M1450.5 672.9 L1486 669.6" stroke="#e41c1c" stroke-width="3.9"/>
<path d="M1483.3 660.2 L1504 667.9 L1485.5 679.5 Z" fill="#e41c1c"/></svg>
<svg style="position:absolute;left:1350px;top:720px" width="80" height="40" viewBox="1350 720 80 40">
<path d="M1357.8 744.8 L1398 736.8" stroke="#e41c1c" stroke-width="3.9"/>
<path d="M1395 728.6 L1416.4 735 L1398.2 747.4 Z" fill="#e41c1c"/></svg>
</body></html>
